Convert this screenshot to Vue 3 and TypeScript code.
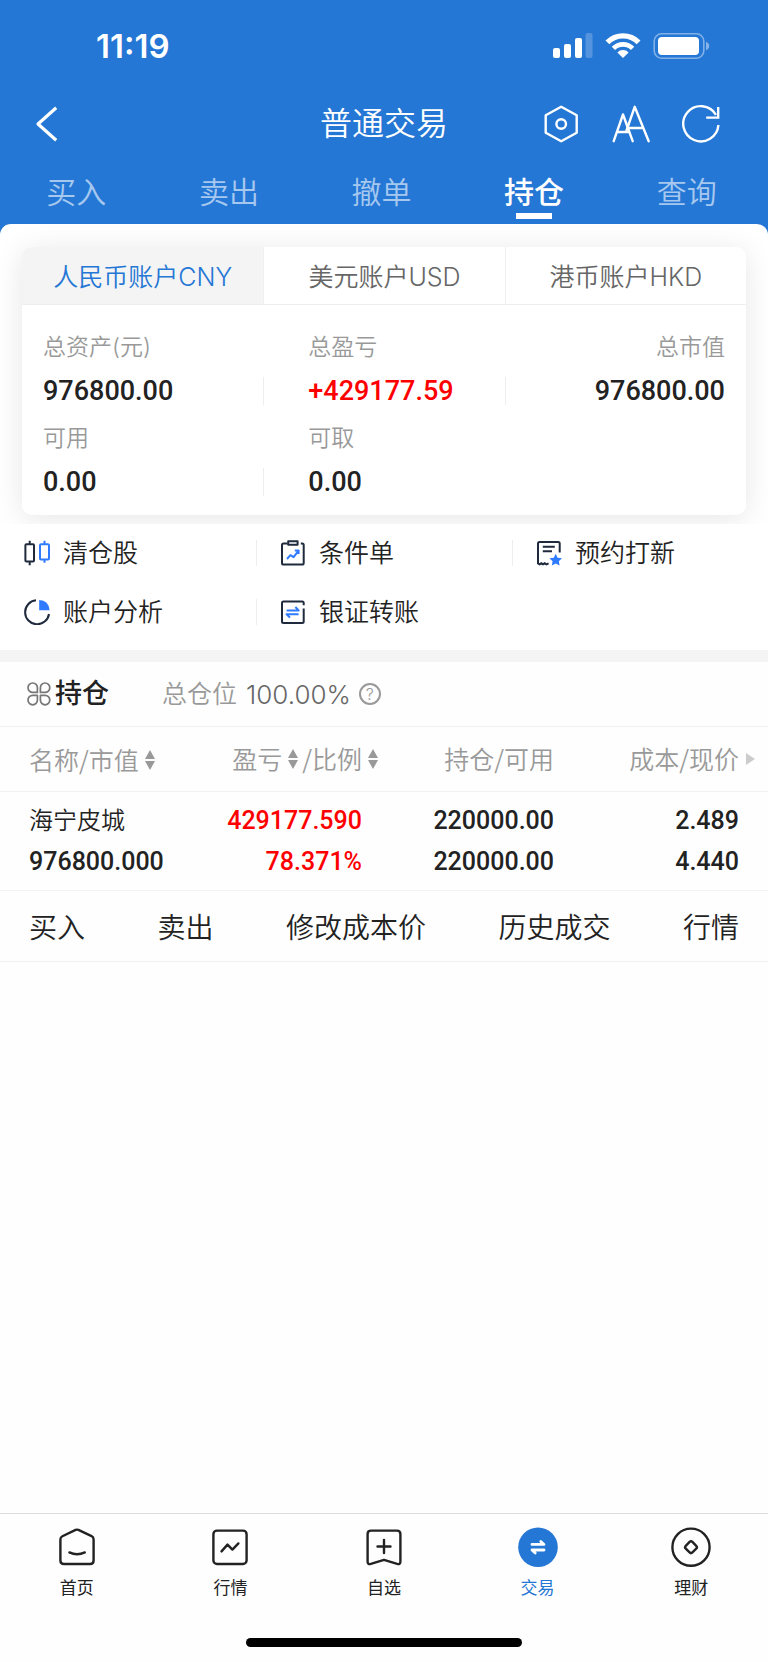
<script setup lang="ts">
import { ref } from 'vue'

interface Metric {
  label: string
  value: string
  up?: boolean
  divided?: boolean
}

const tradeTabs: string[] = ['买入', '卖出', '撤单', '持仓', '查询']
const activeTradeTab = ref('持仓')

const accounts: string[] = ['人民币账户CNY', '美元账户USD', '港币账户HKD']
const activeAccount = ref(accounts[0])

const metrics: Metric[] = [
  { label: '总资产(元)', value: '976800.00', divided: true },
  { label: '总盈亏', value: '+429177.59', up: true, divided: true },
  { label: '总市值', value: '976800.00' },
  { label: '可用', value: '0.00', divided: true },
  { label: '可取', value: '0.00' },
]

const rowActions: string[] = ['买入', '卖出', '修改成本价', '历史成交', '行情']
</script>

<template>
  <div class="page">
    <header class="top">
      <div class="status">
        <span class="time">11:19</span>
        <span class="status-icons">
          <svg width="40" height="26" viewBox="0 0 40 26" fill="#fff" aria-hidden="true">
            <rect x="0" y="15" width="7" height="10" rx="2" />
            <rect x="11" y="11" width="7" height="14" rx="2" />
            <rect x="22" y="5" width="7" height="20" rx="2" />
            <rect x="32.5" y="0" width="7" height="25" rx="2" opacity=".22" />
          </svg>
          <svg width="36" height="26" viewBox="0 0 36 26" fill="none" stroke="#fff" aria-hidden="true">
            <path d="M2.4 9.4A22 22 0 0 1 33.6 9.4" stroke-width="5.4" />
            <path d="M8.4 15.4A13.6 13.6 0 0 1 27.6 15.4" stroke-width="4.8" />
            <path d="M18 25 12.4 19.4A8 8 0 0 1 23.6 19.4Z" fill="#fff" stroke="none" />
          </svg>
          <svg width="57" height="26" viewBox="0 0 57 26" aria-hidden="true">
            <rect x="1.2" y=".8" width="49.6" height="24.4" rx="7.5" fill="none" stroke="#fff" stroke-opacity=".42" stroke-width="1.6" />
            <rect x="5" y="4" width="41" height="18" rx="4" fill="#fff" />
            <path d="M53 8.7q3.2 1.2 3.2 4.3T53 17.3Z" fill="#fff" opacity=".45" />
          </svg>
        </span>
      </div>

      <div class="title-bar">
        <button class="icon-btn back" aria-label="返回">
          <svg width="24" height="40" viewBox="0 0 24 40" fill="none" stroke="#fff" stroke-width="3.2" aria-hidden="true">
            <path d="M21.2 3.7 3 20 21.2 36.3" stroke-linejoin="round" />
          </svg>
        </button>
        <h1>普通交易</h1>
        <div class="tools">
          <button class="icon-btn" aria-label="设置">
            <svg width="40" height="40" viewBox="0 0 40 40" fill="none" stroke="#fff" stroke-width="2.4" stroke-linejoin="round" aria-hidden="true">
              <path d="M20.2 2.7 35.7 11.2V28.8L20.2 37.3 4.7 28.8V11.2Z" />
              <circle cx="20.2" cy="20" r="4.8" />
            </svg>
          </button>
          <button class="icon-btn" aria-label="字号">
            <svg width="40" height="40" viewBox="0 0 40 40" fill="none" stroke="#fff" stroke-width="2.4" stroke-linecap="round" stroke-linejoin="round" aria-hidden="true">
              <path d="M2.7 37.2 12 10.5 21.7 37.2M6.2 28H18.2" />
              <path d="M15.5 26.5 23.7 2.8 37.7 37.2M16.5 24H32.3" />
            </svg>
          </button>
          <button class="icon-btn" aria-label="刷新">
            <svg width="40" height="40" viewBox="0 0 40 40" fill="none" stroke="#fff" stroke-width="2.4" aria-hidden="true">
              <path d="M37.4 21A17.6 17.6 0 1 1 35 10.8" />
              <path d="M37.2 3V13.6H25.2" />
            </svg>
          </button>
        </div>
      </div>

      <nav class="trade-tabs" aria-label="交易功能">
        <button
          v-for="tab in tradeTabs"
          :key="tab"
          :class="{ active: tab === activeTradeTab }"
          @click="activeTradeTab = tab"
        >{{ tab }}</button>
      </nav>
    </header>

    <main>
      <section class="sheet">
        <div class="card">
          <div class="accounts" role="tablist">
            <button
              v-for="account in accounts"
              :key="account"
              role="tab"
              :aria-selected="account === activeAccount"
              :class="{ active: account === activeAccount }"
              @click="activeAccount = account"
            >{{ account }}</button>
          </div>
          <dl class="metrics">
            <div v-for="m in metrics" :key="m.label" class="metric">
              <dt>{{ m.label }}</dt>
              <dd :class="{ up: m.up, divided: m.divided }">{{ m.value }}</dd>
            </div>
          </dl>
        </div>
      </section>

      <section class="shortcuts">
        <a href="#" class="divided">
          <svg width="26" height="26" viewBox="0 0 26 26" fill="none" stroke-width="2" aria-hidden="true">
            <path d="M2.4 4.2H9A1 1 0 0 1 10 5.2V20.6A1 1 0 0 1 9 21.6H2.4A1 1 0 0 1 1.4 20.6V5.2A1 1 0 0 1 2.4 4.2ZM5.7.7V4.2M5.7 21.6V25.3" stroke="#1f2a3d" />
            <path d="M17 4.2H24A1 1 0 0 1 25 5.2V18.4A1 1 0 0 1 24 19.4H17A1 1 0 0 1 16 18.4V5.2A1 1 0 0 1 17 4.2ZM20.5.7V4.2M20.5 19.4V22.7" stroke="#2f7bff" />
          </svg>
          <span>清仓股</span>
        </a>
        <a href="#" class="divided">
          <svg width="26" height="26" viewBox="0 0 26 26" fill="none" stroke="#1f2a3d" stroke-width="2" stroke-linejoin="round" aria-hidden="true">
            <path d="M7.5 3.5H3.5Q2 3.5 2 5V23Q2 24.6 3.5 24.6H22Q23.7 24.6 23.7 23V5Q23.7 3.5 22.2 3.5H20.8" />
            <rect x="8.2" y="1.2" width="9.4" height="3.6" />
            <path d="M7 19 10.4 15.2 13.6 17.2 18.4 10.8M14.8 10.4H18.6V14" stroke="#2f7bff" />
          </svg>
          <span>条件单</span>
        </a>
        <a href="#">
          <svg width="26" height="26" viewBox="0 0 26 26" fill="none" stroke="#1f2a3d" stroke-width="2" aria-hidden="true">
            <path d="M23.7 12.6V3.4Q23.7 1.9 22.2 1.9H3.5Q2 1.9 2 3.4V23.4L3.6 24.4 5.3 23.3 7 24.4 8.7 23.3 10.4 24.4 12.6 23.4" />
            <path d="M6.8 6.8H18.8M6.8 11.2H16" />
            <path d="M19.7 13.8 21.6 17.8 26 18.3 22.8 21.3 23.6 25.6 19.7 23.5 15.8 25.6 16.6 21.3 13.4 18.3 17.8 17.8Z" fill="#2f7bff" stroke="none" />
          </svg>
          <span>预约打新</span>
        </a>
        <a href="#" class="divided">
          <svg width="26" height="26" viewBox="0 0 26 26" fill="none" stroke="#1f2a3d" stroke-width="2" aria-hidden="true">
            <path d="M12 1.3A12 12 0 1 0 25 15" />
            <path d="M15.2 1Q24.8 1.6 25.6 11.2H15.2Z" fill="#2f7bff" stroke="none" />
          </svg>
          <span>账户分析</span>
        </a>
        <a href="#">
          <svg width="26" height="26" viewBox="0 0 26 26" fill="none" stroke="#1f2a3d" stroke-width="2" stroke-linejoin="round" aria-hidden="true">
            <path d="M23.7 9.5V22.5Q23.7 24 22.2 24H3.5Q2 24 2 22.5V4Q2 2.5 3.5 2.5H22.2Q23.7 2.5 23.7 4V6.2" />
            <path d="M6.6 11.4H18.6L15.4 8M18.6 15.3H6.6L10 18.6" stroke="#2f7bff" />
          </svg>
          <span>银证转账</span>
        </a>
      </section>

      <section class="holdings">
        <div class="holdings-head">
          <svg width="24" height="24" viewBox="0 0 24 24" fill="none" stroke="#777" stroke-width="1.7" stroke-linejoin="round" aria-hidden="true">
            <path d="M10.4 10.4H5.8A4.7 4.7 0 1 1 10.4 5.8Z" />
            <path d="M13.4 10.4H18A4.7 4.7 0 1 0 13.4 5.8Z" />
            <path d="M10.4 13.4H5.8A4.7 4.7 0 1 0 10.4 18Z" />
            <path d="M13.4 13.4H18A4.7 4.7 0 1 1 13.4 18Z" />
          </svg>
          <h2>持仓</h2>
          <span class="ratio-label">总仓位</span>
          <span class="ratio">100.00%</span>
          <button class="help" aria-label="总仓位说明">?</button>
        </div>

        <table>
          <thead>
            <tr>
              <th>
                <button>名称/市值<svg class="sort" width="10" height="20" viewBox="0 0 10 20" aria-hidden="true"><path d="M5 0 10 9H0ZM0 11H10L5 20Z" /></svg></button>
              </th>
              <th class="sortable">
                <button>盈亏<svg class="sort" width="10" height="20" viewBox="0 0 10 20" aria-hidden="true"><path d="M5 0 10 9H0ZM0 11H10L5 20Z" /></svg></button><button class="second">/比例<svg class="sort" width="10" height="20" viewBox="0 0 10 20" aria-hidden="true"><path d="M5 0 10 9H0ZM0 11H10L5 20Z" /></svg></button>
              </th>
              <th>持仓/可用</th>
              <th class="scrollable">成本/现价<svg width="9" height="12" viewBox="0 0 9 12" aria-hidden="true"><path d="M0 0 9 6 0 12Z" fill="#ccc" /></svg></th>
            </tr>
          </thead>
          <tbody>
            <tr>
              <td><span class="name">海宁皮城</span></td>
              <td class="up">429177.590</td>
              <td>220000.00</td>
              <td>2.489</td>
            </tr>
            <tr>
              <td>976800.000</td>
              <td class="up">78.371%</td>
              <td>220000.00</td>
              <td>4.440</td>
            </tr>
          </tbody>
        </table>

        <div class="actions">
          <button v-for="action in rowActions" :key="action">{{ action }}</button>
        </div>
      </section>
    </main>

    <footer>
      <nav class="bottom-nav" aria-label="主导航">
        <a href="#">
          <svg width="40" height="40" viewBox="0 0 40 40" aria-hidden="true">
            <path d="M18.6 2.9Q20 2.3 21.4 2.9L34.6 9.2Q36.6 10.2 36.6 12.4V33.4Q36.6 37 33 37H7Q3.4 37 3.4 33.4V12.4Q3.4 10.2 5.4 9.2Z" />
            <path d="M12.4 25.4Q20 29 27.8 25.4" />
          </svg>
          <span>首页</span>
        </a>
        <a href="#">
          <svg width="40" height="40" viewBox="0 0 40 40" aria-hidden="true">
            <rect x="3.4" y="3.6" width="33.2" height="33.4" rx="3.6" />
            <path d="M11.5 24.4 17.5 17.6 22.4 22.6 28.4 16.4" />
          </svg>
          <span>行情</span>
        </a>
        <a href="#">
          <svg width="40" height="40" viewBox="0 0 40 40" aria-hidden="true">
            <path d="M7 3.6H33Q36.4 3.6 36.4 7V34.6Q36.4 37.8 33.2 36.9L20 32.8 6.8 36.9Q3.6 37.8 3.6 34.6V7Q3.6 3.6 7 3.6Z" />
            <path d="M20 13V26M13.5 19.5H26.5" />
          </svg>
          <span>自选</span>
        </a>
        <a href="#" class="active" aria-current="page">
          <svg width="40" height="40" viewBox="0 0 40 40" aria-hidden="true">
            <circle cx="20" cy="20.2" r="19.8" fill="#2577d5" stroke="none" />
            <path d="M14 17.4H26L22.8 14.4M26 23H14L17.2 26" stroke="#fff" stroke-width="2.8" />
          </svg>
          <span>交易</span>
        </a>
        <a href="#">
          <svg width="40" height="40" viewBox="0 0 40 40" aria-hidden="true">
            <circle cx="20" cy="20.2" r="18.6" />
            <rect x="15.3" y="15.5" width="9.4" height="9.4" rx="2" transform="rotate(45 20 20.2)" />
          </svg>
          <span>理财</span>
        </a>
      </nav>
      <div class="home-indicator"></div>
    </footer>
  </div>
</template>

<style>
body {
  margin: 0;
  background: #fff;
}
</style>

<style scoped>
.page {
  display: flex;
  flex-direction: column;
  min-height: 100vh;
  background: #fefefe;
  color: #222;
  font-family: Inter, "Noto Sans CJK SC", sans-serif;
  font-weight: 350;
}

svg {
  display: block;
  flex: none;
}

button {
  margin: 0;
  padding: 0;
  border: 0;
  background: none;
  color: inherit;
  font: inherit;
  cursor: pointer;
}

a {
  color: inherit;
  text-decoration: none;
}

h1,
h2,
dl,
dd {
  margin: 0;
}

main {
  flex: 1;
}

.top {
  background: #2577d5;
  color: #fff;
  padding-bottom: 10px;
}

.status {
  display: flex;
  justify-content: space-between;
  align-items: center;
  height: 92px;
  padding: 0 58px 0 96px;
}

.time {
  font-size: 33px;
  font-weight: 600;
}

.status-icons {
  display: flex;
  gap: 12px;
}

.title-bar {
  display: grid;
  grid-template-columns: 1fr auto 1fr;
  align-items: center;
  height: 64px;
  padding: 0 47px 0 35px;
}

.back {
  justify-self: start;
}

h1 {
  padding-left: 12px;
  font-size: 32px;
  line-height: 40px;
  font-weight: 350;
}

.tools {
  display: flex;
  justify-content: flex-end;
  gap: 30px;
}

.trade-tabs {
  display: grid;
  grid-template-columns: repeat(5, 1fr);
  padding-right: 5px;
}

.trade-tabs button {
  display: flex;
  flex-direction: column;
  align-items: center;
  height: 68px;
  padding-top: 16px;
  box-sizing: border-box;
  font-size: 30px;
  line-height: 40px;
  color: #a6c8ef;
}

.trade-tabs .active {
  color: #fff;
  font-weight: 500;
}

.trade-tabs .active::after {
  content: "";
  width: 36px;
  height: 6px;
  margin-top: 1px;
  background: #fff;
}

.sheet {
  margin-top: -10px;
  padding: 23px 22px 9px;
  border-radius: 11px 11px 0 0;
  overflow: hidden;
  background: #fff;
}

.card {
  border-radius: 10px;
  background: #fff;
  box-shadow: 0 4px 30px rgba(0, 0, 0, 0.1);
}

.accounts {
  display: grid;
  grid-template-columns: repeat(3, 1fr);
  border-bottom: 1px solid #eee;
  border-radius: 10px 10px 0 0;
  overflow: hidden;
}

.accounts button {
  height: 57px;
  padding-bottom: 2px;
  font-size: 25px;
  color: #666;
}

.accounts button + button {
  border-left: 1px solid #f0f0f0;
}

.accounts .active {
  background: #f4f4f4;
  color: #2577d5;
}

.metrics {
  display: grid;
  grid-template-columns: repeat(3, 1fr);
  padding: 25px 0 3px;
}

.metric {
  padding-bottom: 3px;
}

.metric dt {
  padding: 0 21px;
  font-size: 23px;
  line-height: 34px;
  color: #999;
}

.metric dd {
  margin: 13px 0;
  padding: 0 21px;
  font-family: Roboto, sans-serif;
  font-size: 27px;
  line-height: 28px;
  font-weight: 500;
}

.metric .divided {
  margin-right: -1px;
  border-right: 1px solid #eee;
}

.metric:nth-child(3n + 2) dt,
.metric:nth-child(3n + 2) dd {
  padding-left: 45px;
}

.metric:nth-child(3n) {
  text-align: right;
}

.up {
  color: #f00;
}

.shortcuts {
  display: grid;
  grid-template-columns: repeat(3, 1fr);
  row-gap: 33px;
  padding: 16px 0 25px;
  border-bottom: 12px solid #f4f4f4;
  background: #fff;
}

.shortcuts a {
  display: flex;
  align-items: center;
  gap: 13px;
  height: 26px;
  padding-left: 24px;
  font-size: 25px;
  line-height: 26px;
}

.shortcuts .divided {
  margin-right: -1px;
  border-right: 1px solid #eee;
}

.holdings-head {
  display: flex;
  align-items: center;
  height: 64px;
  padding: 0 27px;
  border-bottom: 1px solid #f2f2f2;
}

h2 {
  margin: 0 53px 0 4px;
  font-size: 27px;
  line-height: 40px;
  font-weight: 500;
}

.ratio-label {
  margin-right: 9px;
  font-size: 25px;
  line-height: 36px;
  color: #999;
}

.ratio {
  font-size: 26px;
  color: #666;
}

.help {
  width: 22px;
  height: 22px;
  margin-left: 8px;
  border: 2px solid #999;
  border-radius: 50%;
  box-sizing: border-box;
  font-size: 16px;
  line-height: 18px;
  color: #999;
}

table {
  width: 100%;
  table-layout: fixed;
  border-collapse: collapse;
  border-bottom: 1px solid #f2f2f2;
}

th,
td {
  padding: 0 22px 0 0;
  text-align: right;
  white-space: nowrap;
}

th:first-child,
td:first-child {
  padding: 0 0 0 29px;
  text-align: left;
}

th:last-child,
td:last-child {
  padding-right: 29px;
}

th {
  height: 62px;
  padding-bottom: 2px;
  border-bottom: 1px solid #f2f2f2;
  font-family: "Noto Sans CJK SC", sans-serif;
  font-size: 25px;
  line-height: 36px;
  font-weight: 350;
  color: #999;
}

th.sortable {
  padding-right: 6px;
}

th.scrollable:last-child {
  padding-right: 13px;
}

th.scrollable svg {
  display: inline-block;
  margin-left: 7px;
  vertical-align: 4px;
}

.sort {
  display: inline-block;
  margin-left: 6px;
  vertical-align: 0;
  fill: #999;
}

.second {
  margin-left: 4px;
}

td {
  height: 41px;
  font-family: Roboto, "Noto Sans CJK SC", sans-serif;
  font-size: 25px;
  line-height: 32px;
  font-weight: 500;
}

tbody tr:first-child td {
  padding-top: 8px;
}

tbody tr:last-child td {
  padding-bottom: 8px;
}

.name {
  font-size: 24px;
  font-weight: 350;
}

.actions {
  display: flex;
  justify-content: space-between;
  padding: 0 29px;
  border-bottom: 1px solid #f2f2f2;
}

.actions button {
  height: 70px;
  font-size: 28px;
}

.bottom-nav {
  display: grid;
  grid-template-columns: repeat(5, 1fr);
  padding: 13px 0 38px;
  border-top: 1px solid #ddd;
}

.bottom-nav a {
  display: flex;
  flex-direction: column;
  align-items: center;
  gap: 9px;
  font-size: 17px;
  line-height: 24px;
  font-weight: 400;
}

.bottom-nav svg {
  fill: none;
  stroke: #222;
  stroke-width: 2.4;
  stroke-linecap: round;
  stroke-linejoin: round;
}

.bottom-nav .active {
  color: #2577d5;
}

.home-indicator {
  width: 36%;
  height: 9px;
  margin: 0 auto 15px;
  border-radius: 5px;
  background: #000;
}
</style>
